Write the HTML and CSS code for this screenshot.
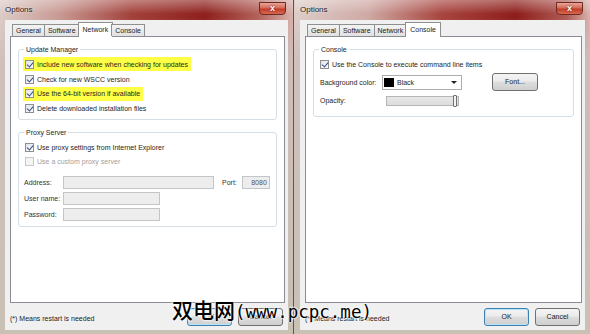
FILE: index.html
```html
<!DOCTYPE html>
<html lang="en">
<head>
    <meta charset="UTF-8">
    <title>Options</title>
    <link rel="stylesheet" href="styles.css">
</head>
<body>
    <!-- 左边窗口: Network -->
    <div class="window win-left">
        <div class="titlebar">
            <span class="title">Options</span>
            <span class="close">x</span>
        </div>
        <div class="client">
            <div class="tabs">
                <span class="tab">General</span>
                <span class="tab">Software</span>
                <span class="tab active">Network</span>
                <span class="tab">Console</span>
            </div>
            <div class="panel">
                <fieldset class="group">
                    <legend>Update Manager</legend>
                    <div class="row"><label class="check hl"><span class="box on"></span>Include new software when checking for updates</label></div>
                    <div class="row"><label class="check"><span class="box on"></span>Check for new WSCC version</label></div>
                    <div class="row"><label class="check hl"><span class="box on"></span>Use the 64-bit version if available</label></div>
                    <div class="row"><label class="check"><span class="box on"></span>Delete downloaded installation files</label></div>
                </fieldset>
                <fieldset class="group proxy">
                    <legend>Proxy Server</legend>
                    <div class="row"><label class="check"><span class="box on"></span>Use proxy settings from Internet Explorer</label></div>
                    <div class="row"><label class="check disabled"><span class="box"></span>Use a custom proxy server</label></div>
                    <div class="field first">
                        <span class="flabel">Address:</span>
                        <span class="input address"></span>
                        <span class="plabel">Port:</span>
                        <span class="input port">8080</span>
                    </div>
                    <div class="field">
                        <span class="flabel">User name:</span>
                        <span class="input short"></span>
                    </div>
                    <div class="field">
                        <span class="flabel">Password:</span>
                        <span class="input short"></span>
                    </div>
                </fieldset>
            </div>
            <div class="footer">
                <span class="note">(*) Means restart is needed</span>
                <span class="btn default">OK</span>
                <span class="btn">Cancel</span>
            </div>
        </div>
    </div>

    <!-- 右边窗口: Console -->
    <div class="window win-right">
        <div class="titlebar">
            <span class="title">Options</span>
            <span class="close">x</span>
        </div>
        <div class="client">
            <div class="tabs">
                <span class="tab">General</span>
                <span class="tab">Software</span>
                <span class="tab">Network</span>
                <span class="tab active">Console</span>
            </div>
            <div class="panel">
                <fieldset class="group console">
                    <legend>Console</legend>
                    <div class="row"><label class="check"><span class="box on"></span>Use the Console to execute command line items</label></div>
                    <div class="crow">
                        <span class="clabel">Background color:</span>
                        <span class="combo"><span class="swatch"></span>Black<span class="arrow"></span></span>
                        <span class="btn font-btn">Font...</span>
                    </div>
                    <div class="crow slim">
                        <span class="clabel">Opacity:</span>
                        <span class="slider"><span class="thumb"></span></span>
                    </div>
                </fieldset>
            </div>
            <div class="footer">
                <span class="note">(*) Means restart is needed</span>
                <span class="btn default">OK</span>
                <span class="btn">Cancel</span>
            </div>
        </div>
    </div>

    <div class="watermark"><span class="wm-cjk">双电网</span><span class="wm-latin">(www.pcpc.me)</span></div>
</body>
</html>
```

FILE: styles.css
```css
* {
    box-sizing: border-box;
}
body {
    margin: 0;
    width: 590px;
    height: 334px;
    overflow: hidden;
    display: flex;
    position: relative;
    background: #5d5550;
    font-family: "Liberation Sans", Arial, sans-serif;
    font-size: 7px;
    color: #1e1e1e;
}
.window {
    height: 334px;
    display: flex;
    flex-direction: column;
    padding: 0 5px 4px 5px;
    background:
        linear-gradient(180deg, rgba(205, 190, 186, 0) 0, rgba(205, 190, 186, 0) 18px, rgba(205, 190, 186, 0.85) 60px, #c8c1b4 100%),
        linear-gradient(90deg, #dccbc7 0%, #c99a94 20%, #a3413b 45%, #8e201c 70%, #b3625b 88%, #d8b2ad 100%);
}
.win-left {
    width: 293px;
}
.win-right {
    width: 296px;
    margin-left: 1px;
    padding-left: 6px;
    background:
        linear-gradient(180deg, rgba(205, 190, 186, 0) 0, rgba(205, 190, 186, 0) 18px, rgba(205, 190, 186, 0.85) 60px, #c8c1b4 100%),
        linear-gradient(90deg, #ddcdc9 0%, #cfa9a4 25%, #a8443e 50%, #8d1e1a 75%, #b05b55 92%, #d8b4ae 100%);
}
.titlebar {
    height: 20px;
    display: flex;
    align-items: flex-start;
    justify-content: space-between;
    background: linear-gradient(180deg, rgba(255, 255, 255, 0.35), rgba(255, 255, 255, 0) 70%);
    margin: 0 -5px;
    padding: 0 7px 0 5px;
}
.title {
    font-size: 8px;
    color: #222;
    margin-top: 5px;
    text-shadow: 0 0 3px rgba(255, 255, 255, 0.8);
}
.close {
    width: 27px;
    height: 13px;
    margin-top: 2px;
    border: 1px solid #6b2a22;
    border-radius: 0 0 4px 4px;
    background: linear-gradient(180deg, #e9a597 0%, #d46a58 45%, #c13b27 55%, #d8694f 100%);
    color: #fff;
    font-size: 9px;
    font-weight: bold;
    line-height: 11px;
    text-align: center;
    text-shadow: 0 0 2px #5a1208;
}
.client {
    flex: 1;
    display: flex;
    flex-direction: column;
    background: #f0f0f0;
    padding: 2px 3px 0 5px;
}
.tabs {
    display: flex;
    align-items: flex-end;
    height: 14px;
    padding-left: 2px;
    position: relative;
    z-index: 1;
}
.tab {
    height: 12px;
    padding: 0 3px;
    line-height: 11px;
    border: 1px solid #8e8f8f;
    border-bottom: none;
    margin-right: -1px;
    background: linear-gradient(180deg, #f3f3f3, #e1e1e1);
    color: #222;
}
.tab.active {
    height: 15px;
    margin-bottom: -1px;
    padding: 0 4px;
    line-height: 13px;
    background: #fff;
    margin-left: -1px;
    margin-right: -2px;
}
.panel {
    flex: 1;
    background: #fff;
    border: 1px solid #898c95;
    padding: 8px 7px 0 7px;
}
.group {
    margin: 0;
    padding: 3px 4px 3px 4px;
    border: 1px solid #d5dfe5;
    border-radius: 3px;
}
.group legend {
    padding: 0 2px;
    margin-left: 1px;
    line-height: 9px;
}
.group.proxy {
    margin-top: 8px;
    padding-bottom: 4px;
}
.row {
    height: 14.7px;
    display: flex;
    align-items: center;
}
.check {
    display: inline-flex;
    align-items: center;
    height: 14px;
    padding-right: 3px;
    white-space: nowrap;
}
.check.hl {
    background: #ffff45;
}
.check.disabled {
    color: #a0a0a0;
}
.box {
    width: 9px;
    height: 9px;
    margin: 0 3px 0 2px;
    border: 1px solid #8e8f8f;
    background: linear-gradient(135deg, #dfe3e8, #fbfbfb);
    position: relative;
}
.box.on::after {
    content: "";
    position: absolute;
    left: 2px;
    top: 0;
    width: 3px;
    height: 5px;
    border: solid #3c4f82;
    border-width: 0 1.5px 1.5px 0;
    transform: rotate(40deg);
}
.check.disabled .box {
    border-color: #c9c9c9;
    background: #f4f4f4;
}
.field {
    display: flex;
    align-items: center;
    height: 16px;
    padding-left: 1px;
}
.field.first {
    margin-top: 5px;
}
.flabel {
    width: 39px;
    color: #333;
}
.plabel {
    margin: 0 5px 0 8px;
    color: #333;
}
.input {
    height: 13px;
    background: #ededed;
    border: 1px solid #c3c6c8;
    color: #555;
    text-align: right;
    padding-right: 2px;
    line-height: 11px;
}
.input.address {
    width: 151px;
}
.input.port {
    width: 28px;
}
.input.short {
    width: 97px;
}
.group.console {
    padding-bottom: 7px;
}
.crow {
    display: flex;
    align-items: center;
    height: 21px;
    padding-left: 2px;
}
.crow.slim {
    height: 16px;
}
.clabel {
    width: 62px;
}
.combo {
    width: 80px;
    height: 15px;
    display: flex;
    align-items: center;
    border: 1px solid #abadb3;
    background: #fff;
    padding-left: 1px;
}
.swatch {
    width: 10px;
    height: 9px;
    background: #000;
    margin-right: 3px;
}
.arrow {
    margin-left: auto;
    margin-right: 4px;
    border: 3px solid transparent;
    border-top: 3px solid #222;
    border-bottom: none;
    width: 0;
    height: 0;
}
.slider {
    width: 73px;
    height: 10px;
    margin-left: 4px;
    border: 1px solid #b5b5b5;
    background: linear-gradient(180deg, #e8e8e8, #dcdcdc);
    position: relative;
}
.thumb {
    position: absolute;
    right: 1px;
    top: -2px;
    width: 4px;
    height: 12px;
    border: 1px solid #707070;
    border-radius: 1px;
    background: #f2f2f2;
}
.footer {
    height: 27px;
    display: flex;
    align-items: center;
    padding: 0 2px 0 0;
    gap: 6px;
}
.note {
    flex: 1;
    padding-left: 0;
    margin-top: 3px;
    color: #222;
}
.btn {
    width: 45px;
    height: 18px;
    border: 1px solid #707070;
    border-radius: 3px;
    background: linear-gradient(180deg, #f4f4f4 0%, #ebebeb 45%, #dddddd 50%, #cfcfcf 100%);
    text-align: center;
    line-height: 16px;
    color: #222;
}
.btn.default {
    border-color: #3c7fb1;
    box-shadow: inset 0 0 0 1px #b7e3fb;
}
.font-btn {
    width: 46px;
    margin-left: 30px;
}
.watermark {
    position: absolute;
    left: 172px;
    top: 294px;
    color: #000;
    font-weight: bold;
    white-space: nowrap;
    text-shadow: 0 0 2px #fff, 0 0 2px #fff, 0 0 3px #fff;
    display: flex;
    align-items: baseline;
}
.wm-cjk {
    font-family: "Noto Sans CJK SC", sans-serif;
    font-size: 21px;
    font-weight: 500;
}
.wm-latin {
    font-family: "DejaVu Sans Mono", monospace;
    font-size: 17.5px;
    font-weight: normal;
}
```
